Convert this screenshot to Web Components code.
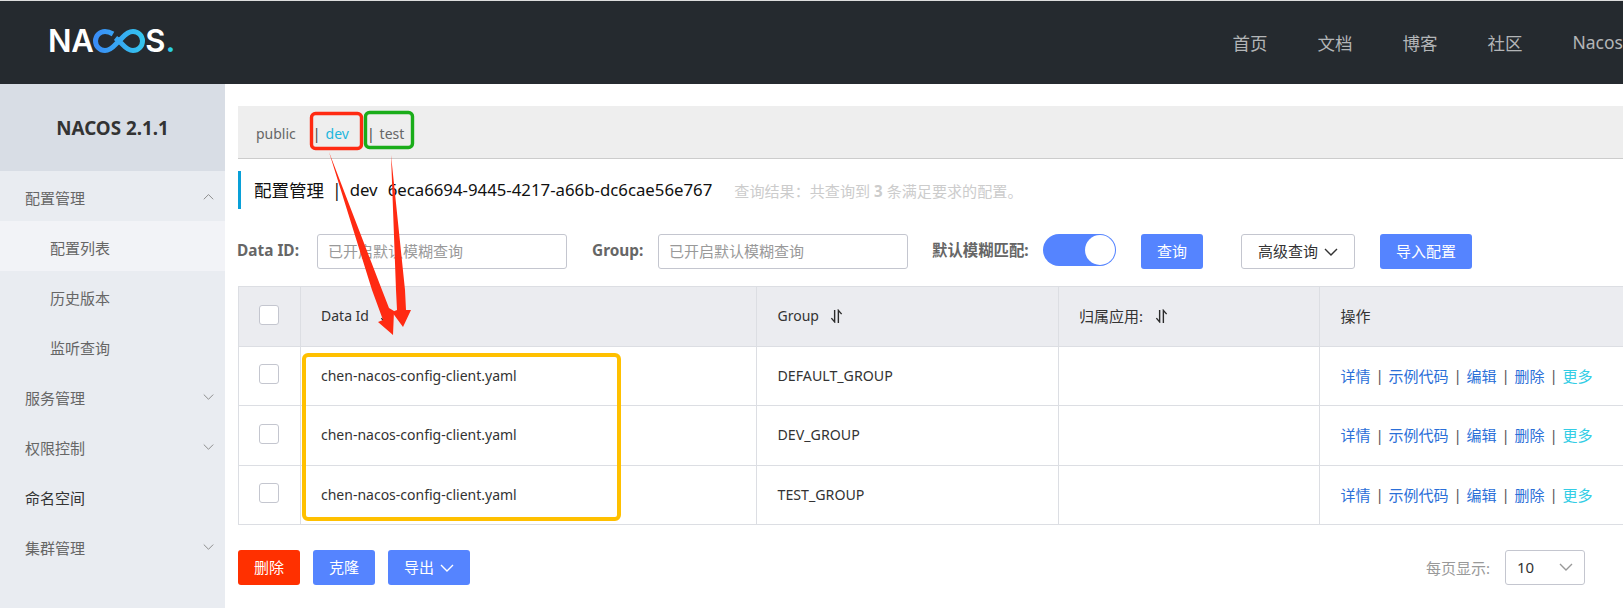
<!DOCTYPE html>
<html lang="zh">
<head>
<meta charset="utf-8">
<title>Nacos</title>
<style>
html,body{margin:0;padding:0;background:#fff}
body{width:1623px;height:608px;overflow:hidden;position:relative;font:15px "Noto Sans","Noto Sans CJK SC",sans-serif;color:#333}
</style>
</head>
<body>
<nacos-app>
  <nacos-topbar slot="top"></nacos-topbar>
  <nacos-sidebar slot="side"></nacos-sidebar>
  <nacos-namespace-bar></nacos-namespace-bar>
  <nacos-page-title></nacos-page-title>
  <nacos-search-form></nacos-search-form>
  <nacos-config-table></nacos-config-table>
  <nacos-footer-bar></nacos-footer-bar>
</nacos-app>
<nacos-annotations></nacos-annotations>
<script>
const FONT = '"Noto Sans","Noto Sans CJK SC",sans-serif';
const chev = (dir, size, color, sw=1.2) => {
  const d = dir === 'up' ? 'M1 8 L7 2 L13 8' : 'M1 2 L7 8 L13 2';
  return `<svg width="${size}" height="${size*10/14}" viewBox="0 0 14 10" fill="none" stroke="${color}" stroke-width="${sw}" style="display:block"><path d="${d}"/></svg>`;
};
const sortIcon = `<svg width="13" height="14" viewBox="0 0 13 15" fill="none" stroke="#2b2b2b" stroke-width="1.5" style="display:block;flex:none"><path d="M4.5 1 V13.8 L1 9.8"/><path d="M8.5 15 V1.5 L12 5.5"/></svg>`;

function def(name, html) {
  customElements.define(name, class extends HTMLElement {
    constructor(){ super(); this.attachShadow({mode:'open'}).innerHTML = typeof html === 'function' ? html(this) : html; }
  });
}

def('nacos-app', `<style>
:host{display:block;width:1623px;height:608px;overflow:hidden}
.body{display:flex;height:524px}
main{flex:1;min-width:0;padding:22px 0 0 13px;overflow:hidden;box-sizing:border-box}
</style>
<slot name="top"></slot>
<div class="body"><slot name="side"></slot><main><slot></slot></main></div>`);

def('nacos-topbar', `<style>
:host{display:flex;align-items:center;justify-content:space-between;height:83px;background:#252a2f;border-top:1px solid #ddd;overflow:hidden;font-family:${FONT}}
.logo{display:flex;align-items:center;margin:-4px 0 0 48px;height:24px;color:#fff;font:600 31px/24px Inter,${FONT}}
.logo svg{display:block}
.dot{color:#2bd0e6}
nav{display:flex;gap:50px;color:#b3b5b7;font-size:17.5px;flex:none}
nav span{white-space:nowrap}
.na{letter-spacing:-.4px}
</style>
<div class="logo"><span class="na">NA</span><svg width="52" height="24" viewBox="0 0 52 24" fill="none"><defs><linearGradient id="g" x1="0" x2="1" y1="0" y2="0"><stop offset="0" stop-color="#3a8df6"/><stop offset="1" stop-color="#34c4ee"/></linearGradient></defs><path stroke="url(#g)" stroke-width="5" d="M20 5 C17 3.2 14.5 2.5 12 2.5 A9.5 9.5 0 0 0 12 21.5 C19 21.5 22 15 26 12 C30 8.5 33 2.5 40 2.5 A9.5 9.5 0 0 1 40 21.5 C33 21.5 30 15 26 12 L22.5 9"/></svg><span>S</span><span class="dot">.</span></div>
<nav><span>首页</span><span>文档</span><span>博客</span><span>社区</span><span>Nacos</span></nav>`);

def('nacos-sidebar', `<style>
:host{display:block;width:225px;flex:none;height:524px;background:#e9ecf1;font-family:${FONT};font-size:15px;color:#666}
.title{height:87px;display:flex;align-items:center;justify-content:center;background:#d8dde5;font-weight:700;font-size:18.8px;color:#333}
.i{height:50px;display:flex;align-items:center;justify-content:space-between;padding:2px 11px 0 25px;box-sizing:border-box}
.s{padding-left:50px}
.sel{background:#f2f3f7}
.ns{color:#333}
</style>
<div class="title">NACOS 2.1.1</div>
<div>
<div class="i"><span>配置管理</span>${chev('up',11,'#888')}</div>
<div class="i s sel"><span>配置列表</span></div>
<div class="i s"><span>历史版本</span></div>
<div class="i s"><span>监听查询</span></div>
<div class="i"><span>服务管理</span>${chev('down',11,'#888')}</div>
<div class="i"><span>权限控制</span>${chev('down',11,'#888')}</div>
<div class="i ns"><span>命名空间</span></div>
<div class="i"><span>集群管理</span>${chev('down',11,'#888')}</div>
</div>`);

def('nacos-namespace-bar', `<style>
:host{display:flex;align-items:center;box-sizing:content-box;height:50px;padding:2px 0 0 18px;background:#eee;border-bottom:1px solid #ccc;font:14px ${FONT};color:#666;white-space:nowrap}
.sep{color:#444}
.dev{color:#1fb6dd}
.g{display:flex;gap:5px;margin-right:18px}
.first{margin-right:17px}
</style>
<span class="first">public</span>
<span class="g"><span class="sep">|</span><span class="dev">dev</span></span>
<span class="g"><span class="sep">|</span><span>test</span></span>`);

def('nacos-page-title', `<style>
:host{display:flex;align-items:center;box-sizing:border-box;height:38px;margin-top:12px;border-left:3px solid #09a0d8;padding:0 0 1px 13px;font:17.5px ${FONT};color:#111;white-space:nowrap}
.s{margin:0 8px 0 8px}
.l{font-size:16.8px}
.id{margin-left:10px}
.r{margin-left:22px;font-size:15.1px;color:#ccc}
b{font-weight:700}
</style>
<span>配置管理</span><span class="s">|</span><span class="l">dev</span><span class="id l">6eca6694-9445-4217-a66b-dc6cae56e767</span><span class="r">查询结果：共查询到 <b>3</b> 条满足要求的配置。</span>`);

def('nacos-btn', el => `<style>
:host{display:inline-flex;align-items:center;justify-content:center;gap:6px;box-sizing:border-box;height:35px;border-radius:3px;font:15px ${FONT};white-space:nowrap;background:#5584ff;color:#fff;padding:0 16px 2px;min-width:62px}
:host([kind=danger]){background:#ff3000}
:host([kind=plain]){background:#fff;color:#333;border:1px solid #c4c6cf}
svg{position:relative;top:1px}
</style><slot></slot>${el.hasAttribute('caret') ? chev('down',14,el.getAttribute('kind')==='plain'?'#333':'#fff',1.4) : ''}`);

def('nacos-field', `<style>
:host{display:flex;align-items:center;box-sizing:border-box;width:250px;height:35px;border:1px solid #c4c6cf;border-radius:3px;background:#fff;padding:0 0 2px 10px;font:15px ${FONT};color:#999;white-space:nowrap}
</style><slot></slot>`);

def('nacos-switch', `<style>
:host{display:block;position:relative;box-sizing:border-box;width:73px;height:32px;border-radius:16px;background:#5584ff}
i{position:absolute;right:1px;top:1px;width:30px;height:30px;border-radius:50%;background:#fff}
</style><i></i>`);

def('nacos-search-form', `<style>
:host{display:flex;align-items:flex-start;margin-top:25px;height:35px;font:15.4px ${FONT};white-space:nowrap}
label{font-weight:700;color:#666;line-height:34px;flex:none}
.a{width:79px;margin-left:-1px;margin-right:1px}.b{width:66px}
.m1{margin-left:25px}
.m2{margin-left:24px;width:86px;margin-right:25px}
.sw{margin-right:25px}
.adv{margin-left:38px;width:114px}
.imp{margin-left:25px;width:92px;padding-left:0;padding-right:0}
</style>
<label class="a">Data ID:</label><nacos-field>已开启默认模糊查询</nacos-field>
<label class="b m1">Group:</label><nacos-field>已开启默认模糊查询</nacos-field>
<label class="m2">默认模糊匹配:</label><nacos-switch class="sw"></nacos-switch>
<nacos-btn>查询</nacos-btn>
<nacos-btn class="adv" kind="plain" caret>高级查询</nacos-btn>
<nacos-btn class="imp">导入配置</nacos-btn>`);

def('nacos-check', `<style>
:host{display:block;box-sizing:border-box;width:20px;height:20px;border:1px solid #c4c6cf;border-radius:3px;background:#fff;margin:-4px auto 0}
</style>`);

def('nacos-actions', `<style>
:host{display:flex;align-items:center;font:15px ${FONT};color:#2b6fd8;white-space:nowrap}
i{font-style:normal;color:#555;width:18px;text-align:center}
.m{color:#33cde5}
</style><span>详情</span><i>|</i><span>示例代码</span><i>|</i><span>编辑</span><i>|</i><span>删除</span><i>|</i><span class="m">更多</span>`);

const row = (g, h) => `<tr style="height:${h}px"><td><nacos-check></nacos-check></td><td class="id">chen-nacos-config-client.yaml</td><td>${g}</td><td></td><td><nacos-actions></nacos-actions></td></tr>`;
def('nacos-config-table', `<style>
:host{display:block;margin-top:17px;width:1400px;font:14.2px ${FONT};color:#333}
table{border-collapse:collapse;table-layout:fixed;width:1400px}
th,td{border:1px solid #dcdee3;padding:0 0 2px 20.5px;text-align:left;font-weight:400;box-sizing:border-box}
th:first-child,td:first-child{padding:0}
.id{font-size:14px}
thead tr{background:#ebecf0;height:60px}
th{font-size:14px}
.cjk{font-size:15px}
.h{display:flex;align-items:center;gap:11px}
.c{gap:12px}
</style>
<table><colgroup><col style="width:61.5px"><col style="width:456.5px"><col style="width:301.5px"><col style="width:261.5px"><col></colgroup>
<thead><tr><th><nacos-check></nacos-check></th><th><div class="h">Data Id ${sortIcon}</div></th><th><div class="h">Group ${sortIcon}</div></th><th><div class="h c cjk"><span>归属应用:</span>${sortIcon}</div></th><th class="cjk">操作</th></tr></thead>
<tbody>${row('DEFAULT_GROUP',59)}${row('DEV_GROUP',60)}${row('TEST_GROUP',59)}</tbody></table>`);

def('nacos-footer-bar', `<style>
:host{display:flex;align-items:center;justify-content:space-between;margin-top:25px;padding-right:38px;height:35px;font:15px ${FONT}}
.l{display:flex;gap:13px}
.r{display:flex;align-items:center;gap:15px;color:#999}
.sel{display:flex;align-items:center;justify-content:space-between;box-sizing:border-box;width:80px;height:35px;border:1px solid #c4c6cf;border-radius:3px;padding:0 11px 1px;color:#333}
</style>
<div class="l"><nacos-btn kind="danger">删除</nacos-btn><nacos-btn>克隆</nacos-btn><nacos-btn caret>导出</nacos-btn></div>
<div class="r"><span>每页显示:</span><div class="sel"><span>10</span>${chev('down',14,'#999',1.4)}</div></div>`);

def('nacos-annotations', `<style>
:host{display:block;position:absolute;left:0;top:0;width:1623px;height:608px;pointer-events:none}
svg{display:block}
</style>
<svg width="1623" height="608" viewBox="0 0 1623 608" fill="none">
<rect x="311.5" y="113.5" width="50" height="35" rx="4" stroke="#ff2a12" stroke-width="3.4"/>
<rect x="365.5" y="112.5" width="47" height="35" rx="4" stroke="#1aad19" stroke-width="3.4"/>
<rect x="304" y="355" width="315" height="164" rx="4" stroke="#ffc000" stroke-width="4"/>
<polygon fill="#ff2a12" points="329,152 382,290 389,308 394,311 393,335 378,322 383,320 372,290"/>
<polygon fill="#ff2a12" points="391,155 405,290 406,310 411,310 403,327 392,312 397,310 396,290"/>
</svg>`);
</script>
</body>
</html>
